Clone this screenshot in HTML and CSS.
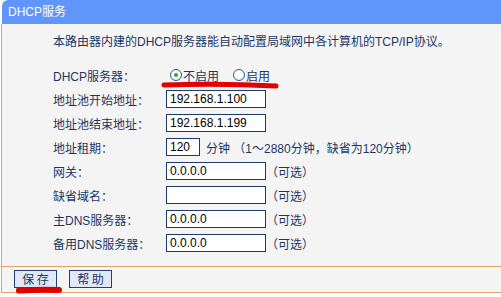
FILE: index.html
```html
<!doctype html>
<html>
<head>
<meta charset="UTF-8">
<title>DHCP服务</title>
<link rel="stylesheet" href="styles.css">
</head>
<body>
<div class="panel">
  <div class="title">DHCP服务</div>
  <div class="content">
    <p class="intro">本路由器内建的DHCP服务器能自动配置局域网中各计算机的TCP/IP协议。</p>
    <div class="form">
      <div class="row">
        <span class="label">DHCP服务器：</span>
        <div class="field">
          <span class="radio checked"></span><span>不启用</span>
          <span class="radio second"></span><span>启用</span>
        </div>
      </div>
      <div class="row">
        <span class="label">地址池开始地址：</span>
        <div class="field"><input class="text" type="text" value="192.168.1.100"></div>
      </div>
      <div class="row">
        <span class="label">地址池结束地址：</span>
        <div class="field"><input class="text" type="text" value="192.168.1.199"></div>
      </div>
      <div class="row">
        <span class="label">地址租期：</span>
        <div class="field"><input class="text short" type="text" value="120"><span class="note">分钟 （1～2880分钟，缺省为120分钟）</span></div>
      </div>
      <div class="row">
        <span class="label">网关：</span>
        <div class="field"><input class="text" type="text" value="0.0.0.0"><span class="opt">（可选）</span></div>
      </div>
      <div class="row">
        <span class="label">缺省域名：</span>
        <div class="field"><input class="text" type="text" value=""><span class="opt">（可选）</span></div>
      </div>
      <div class="row">
        <span class="label">主DNS服务器：</span>
        <div class="field"><input class="text" type="text" value="0.0.0.0"><span class="opt">（可选）</span></div>
      </div>
      <div class="row">
        <span class="label">备用DNS服务器：</span>
        <div class="field"><input class="text" type="text" value="0.0.0.0"><span class="opt">（可选）</span></div>
      </div>
    </div>
  </div>
  <div class="footer">
    <button class="btn">保 存</button>
    <button class="btn">帮 助</button>
  </div>
</div>

<!-- hand-drawn red marks over the screenshot -->
<svg class="marks" width="501" height="297" viewBox="0 0 501 297">
  <path d="M164 85 Q 220 83 276 86" />
  <path d="M19 290.5 Q 38 289.5 59 290" class="thick" />
</svg>
</body>
</html>
```

FILE: styles.css
```css
body { margin: 0; background: #fff; font-family: "Liberation Sans", "Noto Sans CJK SC", sans-serif; font-size: 12px; color: #1c3664; }
.panel { margin-left: 1px; }
.title { margin-left: 1px; height: 24px; line-height: 24px; padding-left: 6px; background: #6095fc; color: #fff; border-top-left-radius: 6px; }
.content { background: #f4f4f4; border-left: 1px solid #e0a468; padding: 9px 0 11px 0; }
.intro { margin: 0 0 12px 0; padding-left: 51px; line-height: 18px; }
.row { display: grid; grid-template-columns: 164px auto; height: 24px; align-items: center; }
.label { padding-left: 51px; white-space: nowrap; }
.field { display: flex; align-items: center; white-space: nowrap; }
.text { box-sizing: border-box; width: 100px; height: 18px; margin: 0; border: 1px solid #1c3a6a; padding: 0 3px; background: #fff; font-family: "Liberation Sans", sans-serif; font-size: 12px; color: #000; }
.text.short { width: 34px; }
.note { margin-left: 6px; }
.opt { margin-left: 0; }
.radio { display: inline-block; box-sizing: border-box; width: 12px; height: 12px; margin: 0 1px 0 4px; border: 1px solid #2b5d8e; border-radius: 50%; background: radial-gradient(circle at 40% 40%, #fff 0, #fff 40%, #dcdcdc 100%); position: relative; }
.radio.second { margin-left: 14px; }
.radio.checked::after { content: ""; position: absolute; left: 3px; top: 3px; width: 4px; height: 4px; border-radius: 50%; background: #2ea62e; }
.footer { background: #f4f4f4; border-top: 1px solid #e0a468; border-bottom: 1px solid #e0a468; border-left: 1px solid #e0a468; padding: 3px 0 4px 12px; display: flex; gap: 12px; }
.btn { box-sizing: border-box; width: 43px; height: 18px; margin: 0; padding: 0; border: 1px solid #24406e; background: #e0e8f8; color: #1c3664; font-family: "Noto Sans CJK SC", sans-serif; font-size: 12px; line-height: 16px; }
.marks { position: absolute; left: 0; top: 0; pointer-events: none; }
.marks path { fill: none; stroke: #e50000; stroke-width: 5; stroke-linecap: round; }
.marks path.thick { stroke-width: 6; }
```
